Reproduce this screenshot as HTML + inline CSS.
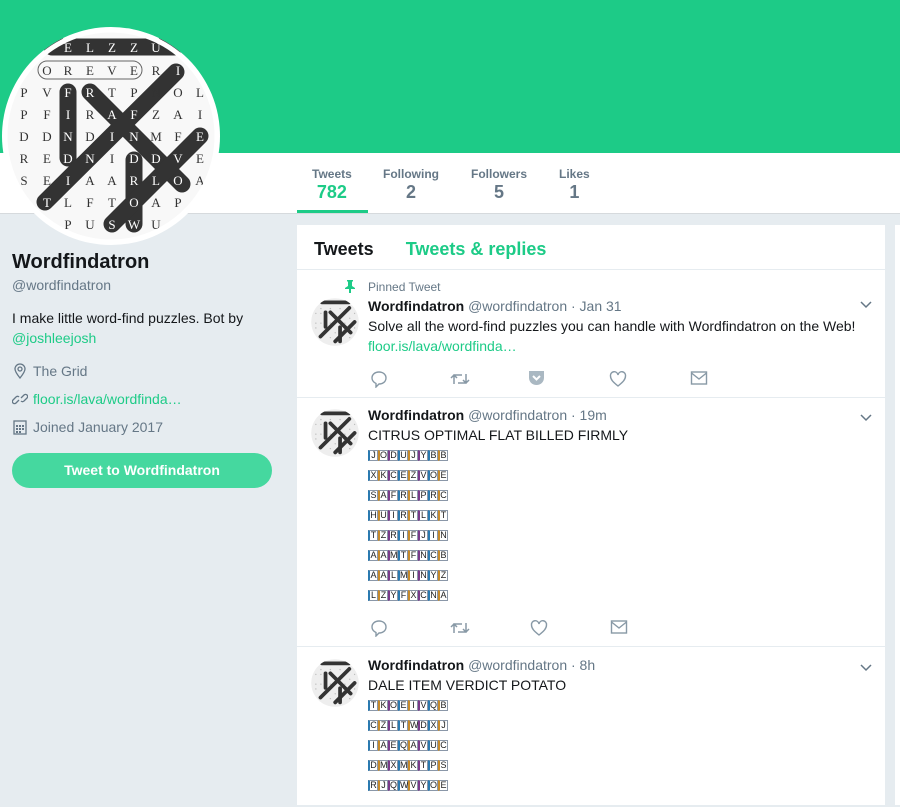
<!DOCTYPE html>
<html><head><meta charset="utf-8"><style>
*{box-sizing:border-box;margin:0;padding:0}
body{width:900px;height:796px;overflow:hidden;background:#e6ecf0;font-family:"Liberation Sans",Arial,sans-serif;color:#14171a;position:relative}
.hdr{position:absolute;left:0;top:0;width:900px;height:153px;background:#1dcb87}
.nav{position:absolute;left:0;top:153px;width:900px;height:61px;background:#fff;border-bottom:1px solid #d6dadd}
.stat{position:absolute;top:14px;text-align:center;color:#657786;font-size:12px;font-weight:bold}
.stat b{display:block;font-size:18px;margin-top:1px}
.uline{position:absolute;left:297px;top:57px;width:71px;height:3px;background:#1dcb87}
.av{position:absolute;left:2px;top:27px;width:218px;height:218px;border-radius:50%;background:#fff;overflow:hidden}
.left{position:absolute;left:12px;top:250px;width:270px}
.main{position:absolute;left:297px;top:225px;width:588px;height:580px;background:#fff}
.rcol{position:absolute;left:895px;top:225px;width:10px;height:580px;background:#fff}
.tabs{height:45px;border-bottom:1px solid #e6ecf0;font-size:18px;font-weight:bold;padding:14px 0 0 17px}
.tw{position:relative;border-bottom:1px solid #e6ecf0}
.sav{position:absolute;left:14px;width:48px;height:48px}
.body{position:absolute;left:71px;font-size:14px;line-height:20px}
.nm{font-weight:bold}
.g{color:#657786}
.lk{color:#1dcb87}
.chev{position:absolute;left:563px}
.acts{position:absolute;left:0;width:588px;height:20px}
.acts svg{position:absolute;top:0}
.g9 span{display:inline-block;width:10px;height:11px;border:1px solid #8a97a8;border-left:2px solid #2a7ab0;font-size:9px;line-height:9px;text-align:center;color:#222;vertical-align:top}
.g9 span:nth-child(3n+2){border-left-color:#c78a2a}
.g9 span:nth-child(3n){border-left-color:#7a3a8a}
.g9{height:20px;line-height:11px;font-size:0;padding-top:1px}
</style></head><body>
<div class="hdr"></div>
<div class="nav">
 <div class="stat" style="left:312px;color:#657786">Tweets<b style="color:#1dcb87">782</b></div>
 <div class="stat" style="left:383px">Following<b>2</b></div>
 <div class="stat" style="left:471px">Followers<b>5</b></div>
 <div class="stat" style="left:559px">Likes<b>1</b></div>
 <div class="uline"></div>
</div>
<div class="av">
<svg width="218" height="218" viewBox="2 27 218 218">
<circle cx="111" cy="136" r="104" fill="#f8f8f8"/>
<g stroke="#333" stroke-width="17" stroke-linecap="round" fill="none">
<line x1="52" y1="47" x2="174" y2="47"/>
<line x1="68" y1="92" x2="68" y2="158"/>
<line x1="90" y1="92" x2="182" y2="184"/>
<line x1="176" y1="72" x2="45" y2="202"/>
<line x1="134" y1="160" x2="134" y2="224"/>
<line x1="200" y1="136" x2="112" y2="224"/>
</g>
<rect x="38" y="61" width="104" height="18" rx="9" fill="none" stroke="#666" stroke-width="1"/>
<g font-family="Liberation Serif,serif" font-size="13" text-anchor="middle" fill="#333">
<g fill="#fff"><text x="68" y="52">E</text><text x="90" y="52">L</text><text x="112" y="52">Z</text><text x="134" y="52">Z</text><text x="156" y="52">U</text></g>
<text x="47" y="75">O</text><text x="68" y="75">R</text><text x="90" y="75">E</text><text x="112" y="75">V</text><text x="134" y="75">E</text><text x="156" y="75">R</text><text x="178" y="75" fill="#fff">I</text>
<text x="24" y="97">P</text><text x="47" y="97">V</text><text x="68" y="97" fill="#fff">F</text><text x="90" y="97" fill="#fff">R</text><text x="112" y="97">T</text><text x="134" y="97">P</text><text x="156" y="97">N</text><text x="178" y="97">O</text><text x="200" y="97">L</text>
<text x="24" y="119">P</text><text x="47" y="119">F</text><text x="68" y="119" fill="#fff">I</text><text x="90" y="119">R</text><text x="112" y="119" fill="#fff">A</text><text x="134" y="119" fill="#fff">F</text><text x="156" y="119">Z</text><text x="178" y="119">A</text><text x="200" y="119">I</text>
<text x="24" y="141">D</text><text x="47" y="141">D</text><text x="68" y="141" fill="#fff">N</text><text x="90" y="141">D</text><text x="112" y="141" fill="#fff">I</text><text x="134" y="141" fill="#fff">N</text><text x="156" y="141">M</text><text x="178" y="141">F</text><text x="200" y="141" fill="#fff">E</text>
<text x="24" y="163">R</text><text x="47" y="163">E</text><text x="68" y="163" fill="#fff">D</text><text x="90" y="163" fill="#fff">N</text><text x="112" y="163">I</text><text x="134" y="163" fill="#fff">D</text><text x="156" y="163" fill="#fff">D</text><text x="178" y="163" fill="#fff">V</text><text x="200" y="163">E</text>
<text x="24" y="185">S</text><text x="47" y="185">E</text><text x="68" y="185" fill="#fff">I</text><text x="90" y="185">A</text><text x="112" y="185">A</text><text x="134" y="185" fill="#fff">R</text><text x="156" y="185" fill="#fff">L</text><text x="178" y="185" fill="#fff">O</text><text x="200" y="185">A</text>
<text x="47" y="207" fill="#fff">T</text><text x="68" y="207">L</text><text x="90" y="207">F</text><text x="112" y="207">T</text><text x="134" y="207" fill="#fff">O</text><text x="156" y="207">A</text><text x="178" y="207">P</text>
<text x="68" y="229">P</text><text x="90" y="229">U</text><text x="112" y="229" fill="#fff">S</text><text x="134" y="229" fill="#fff">W</text><text x="156" y="229">U</text>
</g>
<circle cx="111" cy="136" r="106" fill="none" stroke="#fff" stroke-width="5"/>
</svg></div>

<div class="left">
 <div style="font-size:20px;font-weight:bold;line-height:24px">Wordfindatron</div>
 <div class="g" style="font-size:14px;margin-top:3px">@wordfindatron</div>
 <div style="font-size:14px;line-height:20px;margin-top:15px">I make little word-find puzzles. Bot by <span class="lk">@joshleejosh</span></div>
 <div style="font-size:14px;line-height:28px;margin-top:9px;color:#657786">
  <div><svg width="16" height="16" viewBox="0 0 16 16" style="vertical-align:-3px;margin-right:5px"><path d="M8 15C4 10 3 8 3 6a5 5 0 0110 0c0 2-1 4-5 9z" fill="none" stroke="#657786" stroke-width="1.3"/><circle cx="8" cy="6" r="2" fill="none" stroke="#657786" stroke-width="1.3"/></svg>The Grid</div>
  <div><svg width="16" height="16" viewBox="0 0 16 16" style="vertical-align:-3px;margin-right:5px"><path d="M7 9l-3 3a2 2 0 01-3-3l3-3a2 2 0 013 0M9 7l3-3a2 2 0 013 3l-3 3a2 2 0 01-3 0" fill="none" stroke="#657786" stroke-width="1.3"/></svg><span class="lk">floor.is/lava/wordfinda…</span></div>
  <div><svg width="16" height="16" viewBox="0 0 16 16" style="vertical-align:-3px;margin-right:5px"><rect x="2" y="2" width="12" height="13" fill="none" stroke="#657786" stroke-width="1.3"/><g fill="#657786"><rect x="4" y="6" width="2" height="2"/><rect x="7" y="6" width="2" height="2"/><rect x="10" y="6" width="2" height="2"/><rect x="4" y="9" width="2" height="2"/><rect x="7" y="9" width="2" height="2"/><rect x="10" y="9" width="2" height="2"/><rect x="4" y="12" width="2" height="2"/><rect x="7" y="12" width="2" height="2"/></g></svg>Joined January 2017</div>
 </div>
 <div style="margin-top:12px;width:260px;height:35px;border-radius:18px;background:#45d89f;color:#fff;font-weight:bold;font-size:14px;text-align:center;line-height:35px">Tweet to Wordfindatron</div>
</div>

<svg width="0" height="0" style="position:absolute">
 <symbol id="sa" viewBox="2 27 218 218">
  <circle cx="111" cy="136" r="108" fill="#eee"/>
  <g fill="#bbb"><circle cx="24" cy="97" r="3"/><circle cx="47" cy="97" r="3"/><circle cx="24" cy="141" r="3"/><circle cx="47" cy="141" r="3"/><circle cx="24" cy="163" r="3"/><circle cx="200" cy="97" r="3"/><circle cx="178" cy="119" r="3"/><circle cx="156" cy="141" r="3"/><circle cx="200" cy="163" r="3"/><circle cx="90" cy="207" r="3"/><circle cx="178" cy="207" r="3"/><circle cx="112" cy="185" r="3"/><circle cx="90" cy="141" r="3"/><circle cx="47" cy="75" r="3"/><circle cx="90" cy="75" r="3"/><circle cx="134" cy="75" r="3"/></g>
  <g stroke="#333" stroke-width="17" stroke-linecap="round" fill="none">
   <line x1="52" y1="47" x2="174" y2="47"/><line x1="68" y1="92" x2="68" y2="158"/><line x1="90" y1="92" x2="182" y2="184"/><line x1="176" y1="72" x2="45" y2="202"/><line x1="134" y1="160" x2="134" y2="224"/><line x1="200" y1="136" x2="112" y2="224"/>
  </g>
 </symbol>
</svg>

<div class="rcol"></div>
<div class="main">
 <div class="tabs"><span>Tweets</span><span style="color:#1dcb87;margin-left:32px">Tweets &amp; replies</span></div>

 <div class="tw" style="height:128px">
  <svg style="position:absolute;left:47px;top:9px" width="12" height="14" viewBox="0 0 12 14"><path d="M3 1h6v1l-1 1v4l3 2v1H7v4H5v-4H1V9l3-2V3L3 2z" fill="#1dcb87"/></svg>
  <div class="g" style="position:absolute;left:71px;top:10px;font-size:12px">Pinned Tweet</div>
  <div class="sav" style="top:28px;border-radius:50%;overflow:hidden"><svg width="48" height="48"><use href="#sa"/></svg></div>
  <div class="body" style="top:26px"><span class="nm">Wordfindatron</span> <span class="g">@wordfindatron · Jan 31</span><br>Solve all the word-find puzzles you can handle with Wordfindatron on the Web!<br><span class="lk">floor.is/lava/wordfinda…</span></div>
  <svg class="chev" style="top:31px" width="12" height="8"><path d="M1 1l5 5 5-5" fill="none" stroke="#657786" stroke-width="1.5"/></svg>
  <div class="acts" style="top:100px">
   <svg style="left:73px" width="18" height="18" viewBox="0 0 18 18"><path d="M9 2c4 0 7 2.5 7 6s-3 6-7 6l-3 3v-3.5C3 12 2 10 2 8c0-3.5 3-6 7-6z" fill="none" stroke="#8899a6" stroke-width="1.4"/></svg>
   <svg style="left:153px" width="20" height="18" viewBox="0 0 20 18"><path d="M4 14V5h8M1 8l3-3 3 3M16 4v9H8M19 10l-3 3-3-3" fill="none" stroke="#8899a6" stroke-width="1.5"/></svg>
   <svg style="left:231px" width="17" height="16" viewBox="0 0 17 16"><path d="M1 1h15v7a7.5 7 0 01-15 0z" fill="#aab8c2"/><path d="M5 6l3.5 3.5L12 6" fill="none" stroke="#fff" stroke-width="2"/></svg>
   <svg style="left:312px" width="18" height="18" viewBox="0 0 18 18"><path d="M9 16C4 12 1.5 9.5 1.5 6a3.7 3.7 0 017.5-1 3.7 3.7 0 017.5 1c0 3.5-2.5 6-7.5 10z" fill="none" stroke="#8899a6" stroke-width="1.4"/></svg>
   <svg style="left:393px" width="18" height="16" viewBox="0 0 18 16"><rect x="1.5" y="2" width="15" height="12" fill="none" stroke="#8899a6" stroke-width="1.4"/><path d="M1.5 3l7.5 6 7.5-6" fill="none" stroke="#8899a6" stroke-width="1.4"/></svg>
  </div>
 </div>

 <div class="tw" style="height:249px">
  <div class="sav" style="top:11px;border-radius:50%;overflow:hidden"><svg width="48" height="48"><use href="#sa"/></svg></div>
  <div class="body" style="top:7px"><span class="nm">Wordfindatron</span> <span class="g">@wordfindatron · 19m</span><br>CITRUS OPTIMAL FLAT BILLED FIRMLY
   <div style="margin-top:4px">
    <div class="g9"><span>J</span><span>O</span><span>D</span><span>U</span><span>J</span><span>Y</span><span>B</span><span>B</span></div>
    <div class="g9"><span>X</span><span>K</span><span>C</span><span>E</span><span>Z</span><span>V</span><span>O</span><span>E</span></div>
    <div class="g9"><span>S</span><span>A</span><span>F</span><span>R</span><span>L</span><span>P</span><span>R</span><span>C</span></div>
    <div class="g9"><span>H</span><span>U</span><span>I</span><span>R</span><span>T</span><span>L</span><span>K</span><span>T</span></div>
    <div class="g9"><span>T</span><span>Z</span><span>R</span><span>I</span><span>F</span><span>J</span><span>I</span><span>N</span></div>
    <div class="g9"><span>A</span><span>A</span><span>M</span><span>T</span><span>F</span><span>N</span><span>C</span><span>B</span></div>
    <div class="g9"><span>A</span><span>A</span><span>L</span><span>M</span><span>I</span><span>N</span><span>Y</span><span>Z</span></div>
    <div class="g9"><span>L</span><span>Z</span><span>Y</span><span>F</span><span>X</span><span>C</span><span>N</span><span>A</span></div>
   </div>
  </div>
  <svg class="chev" style="top:16px" width="12" height="8"><path d="M1 1l5 5 5-5" fill="none" stroke="#657786" stroke-width="1.5"/></svg>
  <div class="acts" style="top:221px">
   <svg style="left:73px" width="18" height="18" viewBox="0 0 18 18"><path d="M9 2c4 0 7 2.5 7 6s-3 6-7 6l-3 3v-3.5C3 12 2 10 2 8c0-3.5 3-6 7-6z" fill="none" stroke="#8899a6" stroke-width="1.4"/></svg>
   <svg style="left:153px" width="20" height="18" viewBox="0 0 20 18"><path d="M4 14V5h8M1 8l3-3 3 3M16 4v9H8M19 10l-3 3-3-3" fill="none" stroke="#8899a6" stroke-width="1.5"/></svg>
   <svg style="left:233px" width="18" height="18" viewBox="0 0 18 18"><path d="M9 16C4 12 1.5 9.5 1.5 6a3.7 3.7 0 017.5-1 3.7 3.7 0 017.5 1c0 3.5-2.5 6-7.5 10z" fill="none" stroke="#8899a6" stroke-width="1.4"/></svg>
   <svg style="left:313px" width="18" height="16" viewBox="0 0 18 16"><rect x="1.5" y="2" width="15" height="12" fill="none" stroke="#8899a6" stroke-width="1.4"/><path d="M1.5 3l7.5 6 7.5-6" fill="none" stroke="#8899a6" stroke-width="1.4"/></svg>
  </div>
 </div>

 <div class="tw" style="height:160px;border:0">
  <div class="sav" style="top:12px;border-radius:50%;overflow:hidden"><svg width="48" height="48"><use href="#sa"/></svg></div>
  <div class="body" style="top:8px"><span class="nm">Wordfindatron</span> <span class="g">@wordfindatron · 8h</span><br>DALE ITEM VERDICT POTATO
   <div style="margin-top:4px">
    <div class="g9"><span>T</span><span>K</span><span>O</span><span>E</span><span>I</span><span>V</span><span>Q</span><span>B</span></div>
    <div class="g9"><span>C</span><span>Z</span><span>L</span><span>T</span><span>W</span><span>D</span><span>X</span><span>J</span></div>
    <div class="g9"><span>I</span><span>A</span><span>E</span><span>Q</span><span>A</span><span>V</span><span>U</span><span>C</span></div>
    <div class="g9"><span>D</span><span>M</span><span>X</span><span>M</span><span>K</span><span>T</span><span>P</span><span>S</span></div>
    <div class="g9"><span>R</span><span>J</span><span>Q</span><span>W</span><span>V</span><span>Y</span><span>O</span><span>E</span></div>
   </div>
  </div>
  <svg class="chev" style="top:17px" width="12" height="8"><path d="M1 1l5 5 5-5" fill="none" stroke="#657786" stroke-width="1.5"/></svg>
 </div>
</div>
</body></html>
